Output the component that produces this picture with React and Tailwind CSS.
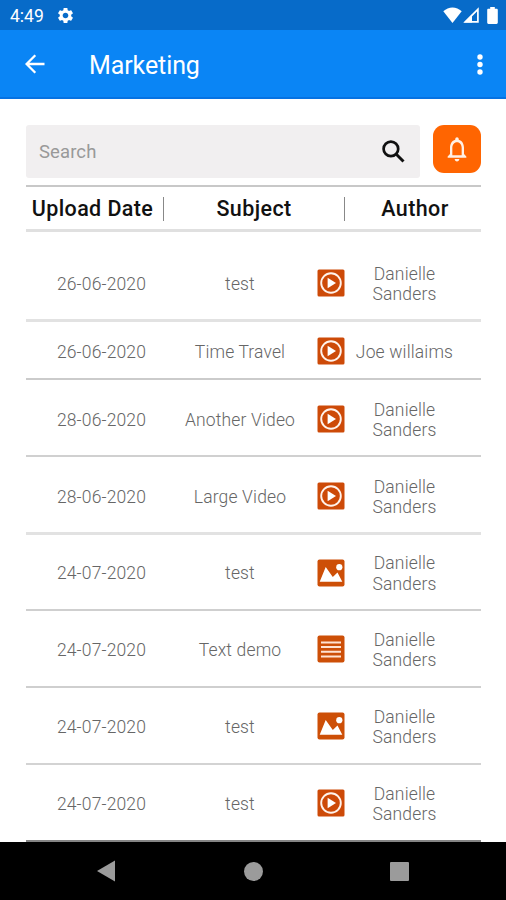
import React from 'react';

const GearIcon = () => <svg className="w-[19px] h-[19px]" fill="currentColor" viewBox="0 0 24 24"><path d="M19.14 12.94c.04-.3.06-.61.06-.94 0-.32-.02-.64-.07-.94l2.03-1.58c.18-.14.23-.41.12-.61l-1.92-3.32c-.12-.22-.37-.29-.59-.22l-2.39.96c-.5-.38-1.03-.7-1.62-.94l-.36-2.54c-.04-.24-.24-.41-.48-.41h-3.84c-.24 0-.43.17-.47.41l-.36 2.54c-.59.24-1.13.57-1.62.94l-2.39-.96c-.22-.08-.47 0-.59.22L2.74 8.87c-.12.21-.08.47.12.61l2.03 1.58c-.05.3-.09.63-.09.94s.02.64.07.94l-2.03 1.58c-.18.14-.23.41-.12.61l1.92 3.32c.12.22.37.29.59.22l2.39-.96c.5.38 1.03.7 1.62.94l.36 2.54c.05.24.24.41.48.41h3.84c.24 0 .44-.17.47-.41l.36-2.54c.59-.24 1.13-.56 1.62-.94l2.39.96c.22.08.47 0 .59-.22l1.92-3.32c.12-.22.07-.47-.12-.61l-2.01-1.58zM12 15.6c-1.98 0-3.6-1.62-3.6-3.6s1.62-3.6 3.6-3.6 3.6 1.62 3.6 3.6-1.62 3.6-3.6 3.6z"></path></svg>;
const WifiIcon = () => <svg className="w-[19px] h-[16px]" fill="currentColor" viewBox="0 0 19 16"><path d="M9.5 16L0.3 4.2C5.5-0.9 13.5-0.9 18.7 4.2Z"></path></svg>;
const SignalIcon = () => <svg className="w-[16px] h-[16px]" fill="none" stroke="currentColor" viewBox="0 0 16 16"><path strokeWidth="1.7" d="M2.3 14.9L14.9 2.3V14.9Z"></path><path fill="currentColor" stroke="none" d="M1 15.5L9 7.5V15.5Z"></path></svg>;
const BatteryIcon = () => <svg className="w-[11px] h-[17px]" fill="currentColor" viewBox="0 0 11 17"><path d="M3.2 0h4.6v1.8h1.7c.8 0 1.3.5 1.3 1.3v12.5c0 .8-.5 1.4-1.3 1.4h-8C.7 17 .2 16.4.2 15.6V3.1c0-.8.5-1.3 1.3-1.3h1.7z"></path></svg>;
const BackIcon = () => <svg className="w-[20px] h-[20px]" fill="none" stroke="currentColor" viewBox="0 0 20 20"><path strokeWidth="2.3" d="M19.5 10H2M10.3 1.2L1.6 10l8.7 8.8"></path></svg>;
const MoreIcon = () => <svg className="w-[6px] h-[22px]" fill="currentColor" viewBox="0 0 6 22"><circle cx="3" cy="4" r="2.7"></circle><circle cx="3" cy="11.5" r="2.7"></circle><circle cx="3" cy="19" r="2.7"></circle></svg>;
const SearchIcon = () => <svg className="w-[23px] h-[23px]" fill="none" stroke="currentColor" viewBox="0 0 23 23"><circle cx="8.9" cy="8.9" r="7.3" strokeWidth="2.7"></circle><path strokeWidth="3" d="M13.8 13.8L21.5 21.5"></path></svg>;
const BellIcon = () => <svg className="w-[28px] h-[30px]" fill="currentColor" preserveAspectRatio="none" viewBox="0 0 24 24"><path d="M12 22c1.1 0 2-.9 2-2h-4c0 1.1.9 2 2 2zm6-6v-5c0-3.07-1.63-5.64-4.5-6.32V4c0-.83-.67-1.5-1.5-1.5s-1.5.67-1.5 1.5v.68C7.64 5.36 6 7.92 6 11v5l-2 2v1h16v-1l-2-2zm-2 1H8v-6c0-2.48 1.51-4.5 4-4.5s4 2.02 4 4.5v6z"></path></svg>;

const VideoIcon = () => (
    <svg className="w-7 h-7" viewBox="0 0 28 28">
        <rect x="0.5" y="0.5" width="27" height="27" rx="1.5" fill="#cd4a08"></rect>
        <circle cx="14" cy="14" r="9.8" fill="none" stroke="#fff3ec" strokeWidth="1.9"></circle>
        <path d="M10.6 8.7V19.3L19 14Z" fill="#fff"></path>
    </svg>
);
const ImageIcon = () => (
    <svg className="w-7 h-7" viewBox="0 0 28 28">
        <rect x="0.5" y="0.5" width="27" height="27" rx="2" fill="#cd4f07"></rect>
        <path d="M2.7 22.7L8.7 8L15.8 18L20.5 13.5L25.3 22.7Z" fill="#fff"></path>
        <circle cx="22.3" cy="8.2" r="3.1" fill="#fff"></circle>
    </svg>
);
const TextIcon = () => (
    <svg className="w-7 h-7" viewBox="0 0 28 28">
        <rect x="0.5" y="0.5" width="27" height="27" rx="2" fill="#cd4f07"></rect>
        <path d="M4 7.5H24M4 12H24M4 16.8H24M4 21.5H24" stroke="#ffe3d2" strokeWidth="1.9"></path>
    </svg>
);

const icons = { video: VideoIcon, image: ImageIcon, text: TextIcon };

const uploads = [
    { date: '26-06-2020', subject: 'test', type: 'video', author: 'Danielle Sanders', row: 'h-[90px] pt-[17px] border-b-[3px] border-[#e2e2e2]' },
    { date: '26-06-2020', subject: 'Time Travel', type: 'video', author: 'Joe willaims', row: 'h-[58px] pt-[4px] border-b-2 border-[#cbcbcb]' },
    { date: '28-06-2020', subject: 'Another Video', type: 'video', author: 'Danielle Sanders', row: 'h-[77px] pt-[5px] border-b-2 border-[#d0d0d0]' },
    { date: '28-06-2020', subject: 'Large Video', type: 'video', author: 'Danielle Sanders', row: 'h-[78px] pt-[5px] border-b-[3px] border-[#e2e2e2]' },
    { date: '24-07-2020', subject: 'test', type: 'image', author: 'Danielle Sanders', row: 'h-[76px] pt-[3px] border-b-2 border-[#cfcfcf]' },
    { date: '24-07-2020', subject: 'Text demo', type: 'text', author: 'Danielle Sanders', row: 'h-[77px] pt-[3px] border-b-2 border-[#cfcfcf]' },
    { date: '24-07-2020', subject: 'test', type: 'image', author: 'Danielle Sanders', row: 'h-[77px] pt-[3px] border-b-2 border-[#d3d3d3]' },
    { date: '24-07-2020', subject: 'test', type: 'video', author: 'Danielle Sanders', row: 'h-[77px] pt-[3px] border-b-2 border-[#858585]' },
];

const UploadRow = ({ upload }) => {
    const Icon = icons[upload.type];

    return (
        <div className={`grid grid-cols-[151px_126px_14px_28px_119px] items-center text-center ${upload.row}`}>
            <span>{upload.date}</span>
            <span>{upload.subject}</span>
            <span></span>
            <span className="pb-[2px]"><Icon /></span>
            <span className="px-2">{upload.author}</span>
        </div>
    );
};

const App = () => {
    return (
        <div className="flex flex-col w-[506px] h-[900px] overflow-hidden bg-white font-['Roboto',sans-serif]">
            <div className="flex items-center h-[30px] shrink-0 pl-[10px] pr-[8px] bg-[#076bc9] text-white">
                <span className="w-[46px] pt-[2px] text-[17.5px] leading-5">4:49</span>
                <GearIcon />
                <div className="flex items-center ml-auto">
                    <WifiIcon />
                    <span className="w-px"></span>
                    <SignalIcon />
                    <span className="w-[8px]"></span>
                    <BatteryIcon />
                </div>
            </div>
            <header className="flex items-center h-[69px] shrink-0 pl-[25px] pr-[23px] bg-[#0a85f5] border-b-2 border-[#0672e2] text-white">
                <BackIcon />
                <h1 className="ml-[44px] pt-[4px] text-[25px] leading-8 tracking-[-0.1px]">Marketing</h1>
                <span className="ml-auto"><MoreIcon /></span>
            </header>

            <main className="flex flex-col h-[743px] shrink-0 pt-[26px] pl-[26px] pr-[25px] overflow-hidden">
                <div className="flex justify-between shrink-0">
                    <div className="flex items-center justify-between w-[394px] h-[53px] pl-[13px] pr-[15px] rounded-[3px] bg-[#f1eff0]">
                        <span className="pt-[2px] text-[18.5px] text-[#999] tracking-[0.1px]">Search</span>
                        <span className="text-[#111]"><SearchIcon /></span>
                    </div>
                    <button className="flex items-center justify-center w-[48px] h-[48px] rounded-[11px] bg-[#ff6501] text-[#fff0e5]">
                        <BellIcon />
                    </button>
                </div>

                <div className="grid grid-cols-[133px_9px_172px_9px_132px] items-center h-[47px] shrink-0 mt-[7px] border-t-2 border-b-[3px] border-t-[#c8c8c8] border-b-[#e0e0e0] text-center text-[21.5px] font-medium tracking-[0.4px] text-[#111]">
                    <span className="pt-[3px]">Upload Date</span>
                    <span className="justify-self-center w-[1.5px] h-6 mt-px bg-[#888]"></span>
                    <span className="pt-[3px]">Subject</span>
                    <span className="justify-self-center w-[1.5px] h-6 mt-px bg-[#888]"></span>
                    <span className="pt-[3px]">Author</span>
                </div>

                <div className="text-[17.5px] leading-[20.5px] tracking-[0.15px] font-light text-[#666]">
                    {uploads.map((upload, index) => <UploadRow key={index} upload={upload} />)}
                </div>
            </main>

            <nav className="flex items-center h-[58px] shrink-0 pl-[97px] pr-[97px] justify-between bg-black text-[#9b9b9b]">
                <svg className="w-[18px] h-[22px]" fill="currentColor" viewBox="0 0 18 22"><path d="M18 0.5V21.5L0 11Z"></path></svg>
                <span className="w-[19px] h-[19px] ml-px rounded-full bg-current"></span>
                <span className="w-[19px] h-[19px] rounded-[1px] bg-current"></span>
            </nav>
        </div>
    );
};

export default App;
